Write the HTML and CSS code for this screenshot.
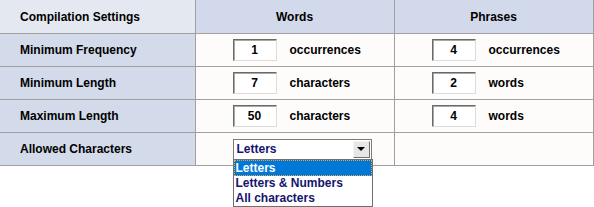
FILE: index.html
```html
<!DOCTYPE html>
<html>
<head>
<meta charset="utf-8">
<link rel="stylesheet" href="styles.css">
</head>
<body>
<div class="page">
<table class="settings">
  <colgroup>
    <col class="c-label">
    <col class="c-words">
    <col class="c-phrases">
  </colgroup>
  <thead>
    <tr>
      <th class="corner">Compilation Settings</th>
      <th class="head">Words</th>
      <th class="head last">Phrases</th>
    </tr>
  </thead>
  <tbody>
    <tr>
      <td class="label">Minimum Frequency</td>
      <td class="data"><div class="field"><span class="num">1</span><span class="unit">occurrences</span></div></td>
      <td class="data last"><div class="field"><span class="num">4</span><span class="unit">occurrences</span></div></td>
    </tr>
    <tr>
      <td class="label">Minimum Length</td>
      <td class="data"><div class="field"><span class="num">7</span><span class="unit">characters</span></div></td>
      <td class="data last"><div class="field"><span class="num">2</span><span class="unit">words</span></div></td>
    </tr>
    <tr>
      <td class="label">Maximum Length</td>
      <td class="data"><div class="field"><span class="num">50</span><span class="unit">characters</span></div></td>
      <td class="data last"><div class="field"><span class="num">4</span><span class="unit">words</span></div></td>
    </tr>
    <tr>
      <td class="label">Allowed Characters</td>
      <td class="data">
        <div class="field">
          <div class="select">
            <span class="select-value">Letters</span>
            <span class="select-btn"><span class="arrow"></span></span>
            <ul class="options">
              <li class="opt selected">Letters</li>
              <li class="opt">Letters &amp; Numbers</li>
              <li class="opt">All characters</li>
            </ul>
          </div>
        </div>
      </td>
      <td class="data last"></td>
    </tr>
  </tbody>
</table>
</div>
</body>
</html>
```

FILE: styles.css
```css
html, body {
  margin: 0;
  padding: 0;
  background: #ffffff;
}

body {
  font-family: "Liberation Sans", Arial, sans-serif;
  font-size: 12px;
  font-weight: bold;
  color: #000000;
}

.page {
  min-height: 207px;
}

.settings {
  border-collapse: collapse;
  table-layout: fixed;
  width: 593px;
}

.c-label { width: 195px; }
.c-words { width: 199px; }
.c-phrases { width: 199px; }

.settings th,
.settings td {
  padding: 0;
  border-right: 1px solid #a0a0a0;
  border-bottom: 1px solid #a0a0a0;
  vertical-align: middle;
}

.settings th {
  height: 33px;
  font-weight: bold;
}

.settings td {
  height: 32px;
}

.corner {
  background: #e4e8f0;
  text-align: left;
  padding-left: 20px !important;
}

.head {
  background: #d2d9ea;
  text-align: center;
}

.label {
  background: #d3daea;
  padding-left: 20px !important;
}

.data {
  background: #fdfcfa;
  padding-left: 37px !important;
}

.field {
  display: flex;
  align-items: center;
  gap: 13px;
}

.num {
  box-sizing: border-box;
  width: 44px;
  height: 22px;
  display: flex;
  align-items: center;
  justify-content: center;
  background: #ffffff;
  border-style: solid;
  border-width: 1px;
  border-color: #6a6a6a #dcdcdc #dcdcdc #6a6a6a;
  box-shadow: inset 1px 1px 0 #a8a8a8;
  padding-bottom: 1px;
}

.select {
  position: relative;
  z-index: 5;
  box-sizing: border-box;
  width: 139px;
  height: 21px;
  border: 1px solid #7a7a7a;
  background: #ffffff;
  display: flex;
  align-items: center;
  justify-content: space-between;
  color: #14146e;
}

.select-value {
  padding-left: 3px;
}

.select-btn {
  box-sizing: border-box;
  width: 17px;
  height: 17px;
  margin-right: 1px;
  background: #e6e6e6;
  border-style: solid;
  border-width: 1px;
  border-color: #f4f4f4 #707070 #707070 #f4f4f4;
  display: flex;
  align-items: center;
  justify-content: center;
}

.arrow {
  width: 0;
  height: 0;
  border-left: 4px solid transparent;
  border-right: 4px solid transparent;
  border-top: 4px solid #000000;
}

.options {
  position: absolute;
  z-index: 10;
  left: -1px;
  top: 19px;
  box-sizing: border-box;
  width: 140px;
  margin: 0;
  padding: 0;
  list-style: none;
  background: #ffffff;
  border: 1px solid #6f6f6f;
  color: #14146e;
}

.opt {
  display: block;
  height: 15px;
  line-height: 15px;
  padding-left: 2px;
  white-space: nowrap;
}

.opt.selected {
  box-sizing: border-box;
  height: 16px;
  line-height: 14px;
  padding-left: 1px;
  background: #0078d7;
  color: #ffffff;
  border: 1px dotted #f0a040;
}
```
